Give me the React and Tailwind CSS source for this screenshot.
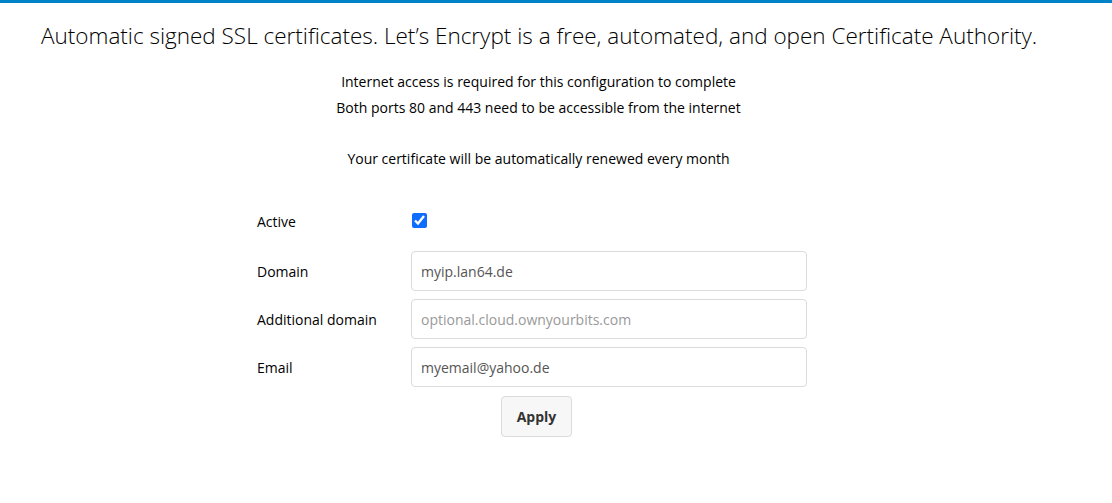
import React, { useState } from "react";

// Let's Encrypt config panel
const fields = [
    { label: "Domain", value: "myip.lan64.de", placeholder: "" },
    { label: "Additional domain", value: "", placeholder: "optional.cloud.ownyourbits.com" },
    { label: "Email", value: "myemail@yahoo.de", placeholder: "" },
];

export default function App() {
    const [active, setActive] = useState(true);

    return (
        <div className="min-h-[503px] bg-white text-[#222] font-['Open_Sans',sans-serif]">
            {/* Top accent bar */}
            <div className="h-[3px] bg-[#0082c9]"></div>

            <div className="w-[1077px]">
                <h2 className="pl-[41px] pt-[19px] text-[22.5px] font-light leading-[28px] text-black">
                    Automatic signed SSL certificates. Let’s Encrypt is a free, automated, and open Certificate Authority.
                </h2>

                <div className="mt-[19px] text-center text-[14px] leading-[26px] text-black">
                    <p>Internet access is required for this configuration to complete</p>
                    <p>Both ports 80 and 443 need to be accessible from the internet</p>
                    <p className="mt-[25px]">Your certificate will be automatically renewed every month</p>
                </div>

                {/* Form */}
                <div className="mt-[34px] pl-[257px] text-[14px] text-black">
                    <div className="flex items-center h-[30px]">
                        <span className="w-[154px]">Active</span>
                        <input
                            type="checkbox"
                            checked={active}
                            onChange={(e) => setActive(e.target.checked)}
                            className="ml-[1px] -mt-[1px] w-[15px] h-[15px] accent-[#0d6efd]"
                        />
                    </div>

                    <div className="mt-[15px] flex flex-col gap-[8px]">
                        {fields.map((f) => (
                            <div key={f.label} className="flex items-center">
                                <span className="w-[154px]">{f.label}</span>
                                <input
                                    type="text"
                                    defaultValue={f.value}
                                    placeholder={f.placeholder}
                                    className="w-[396px] h-[40px] px-[9px] text-[14px] text-[#555] placeholder:text-[#999] border border-[#dbdbdb] rounded-[4px] outline-none"
                                />
                            </div>
                        ))}
                    </div>

                    <button className="mt-[9px] ml-[244px] w-[71px] h-[41px] bg-[#f7f7f7] border border-[#dbdbdb] rounded-[4px] font-bold text-[14px] text-[#333]">
                        Apply
                    </button>
                </div>
            </div>
        </div>
    );
}
